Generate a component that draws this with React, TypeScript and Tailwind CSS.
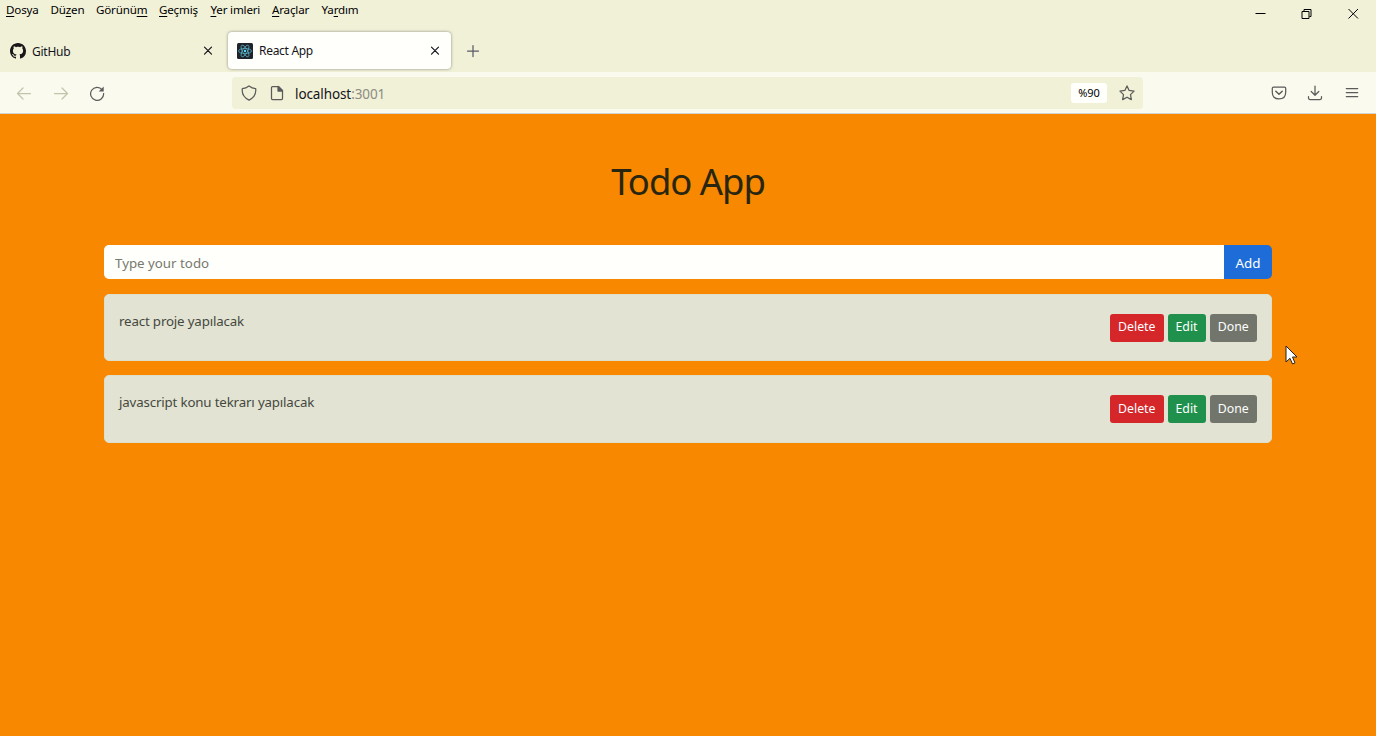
import type { ReactNode } from "react";

const menus: [string, string, string, string][] = [
  ["", "D", "osya", "w-[44.5px]"],
  ["Dü", "z", "en", "w-[45.5px]"],
  ["Görünü", "m", "", "w-[63px]"],
  ["", "G", "eçmiş", "w-[51.5px]"],
  ["", "Y", "er imleri", "w-[61.5px]"],
  ["", "A", "raçlar", "w-[49.5px]"],
  ["Ya", "r", "dım", "w-[45px]"],
];

function Icon({ size = 16, className = "", children }: { size?: number; className?: string; children: ReactNode }) {
  return (
    <svg width={size} height={size} viewBox="0 0 16 16" fill="none" stroke="currentColor" strokeWidth="1.25" strokeLinecap="round" strokeLinejoin="round" className={`shrink-0 ${className}`}>
      {children}
    </svg>
  );
}

const Cross = ({ className }: { className: string }) => (
  <Icon className={className}><path d="M4.5 4.200l7 7M11.500 4.200l-7 7" strokeWidth="1.2" /></Icon>
);

function ReactLogo() {
  return (
    <svg width="16" height="16" viewBox="0 0 16 16" className="ml-[9px] shrink-0">
      <rect width="16" height="16" rx="1.5" fill="#20232a" />
      <g fill="none" stroke="#55b4cc" strokeWidth=".75">
        <ellipse cx="8" cy="8" rx="6.5" ry="2.5" />
        <ellipse cx="8" cy="8" rx="6.5" ry="2.5" transform="rotate(60 8 8)" />
        <ellipse cx="8" cy="8" rx="6.5" ry="2.5" transform="rotate(120 8 8)" />
      </g>
      <circle cx="8" cy="8" r="1.2" fill="#61dafb" />
    </svg>
  );
}

function GithubLogo() {
  return (
    <svg width="16" height="16" viewBox="0 0 16 16" fill="#191717" className="ml-[10px] shrink-0">
      <path d="M8 0C3.58 0 0 3.58 0 8c0 3.54 2.29 6.53 5.47 7.59.4.07.55-.17.55-.38 0-.19-.01-.82-.01-1.49-2.01.37-2.53-.49-2.69-.94-.09-.23-.48-.94-.82-1.13-.28-.15-.68-.52-.01-.53.63-.01 1.08.58 1.23.82.72 1.21 1.87.87 2.33.66.07-.52.28-.87.51-1.07-1.78-.2-3.64-.89-3.64-3.95 0-.87.31-1.59.82-2.15-.08-.2-.36-1.02.08-2.12 0 0 .67-.21 2.2.82.64-.18 1.32-.27 2-.27s1.36.09 2 .27c1.53-1.04 2.2-.82 2.2-.82.44 1.1.16 1.92.08 2.12.51.56.82 1.27.82 2.15 0 3.07-1.87 3.75-3.65 3.95.29.25.54.73.54 1.48 0 1.07-.01 1.93-.01 2.2 0 .21.15.46.55.38A8.01 8.01 0 0 0 16 8c0-4.42-3.58-8-8-8z" />
    </svg>
  );
}

function Todo({ text }: { text: string }) {
  return (
    <div className="flex h-[67.4px] items-start justify-between rounded-[5px] border border-[#dddecb] bg-[#e2e3d2] px-[14px] pt-[16.500px]">
      <span className="text-[13.300px] leading-[18px] tracking-[-0.160px] text-[#45483f]">{text}</span>
      <div className="mt-[2px] flex h-[28px] gap-1 text-[12.3px] text-white">
        <button className="w-[53.500px] rounded-[3px] bg-[#d5262a]">Delete</button>
        <button className="w-[38px] rounded-[3px] bg-[#20914d]">Edit</button>
        <button className="w-[47.500px] rounded-[3px] bg-[#71756b]">Done</button>
      </div>
    </div>
  );
}

export default function App() {
  return (
    <div className="relative flex h-[736px] w-[1376px] flex-col overflow-hidden bg-[#f78800] font-['Noto_Sans',sans-serif]">
      <header className="flex h-[72px] shrink-0 flex-col bg-[#f1f1d8]">
        <div className="flex h-[28px] justify-between">
          <nav className="flex pl-[6px] pt-[1px] text-[11.6px] leading-[17px] text-black">
            {menus.map(([a, b, c, w]) => (
              <span key={a + b + c} className={`${w} whitespace-nowrap tracking-[-0.18px]`}>{a}<span className="underline underline-offset-2">{b}</span>{c}</span>
            ))}
          </nav>
          <div className="flex items-center pr-[17px] text-black">
            <svg width="104" height="12" viewBox="0 0 104 12" fill="none" stroke="currentColor">
              <path d="M0.5 5.5h10M47 3.5h7v7h-7zM49 3V1.5h7v7h-1.5M93.5 1l9.5 9.5M103 1l-9.5 9.5" />
            </svg>
          </div>
        </div>
        <div className="flex h-[44px] items-start pt-[4px] text-[12px] text-[#15141a]">
          <div className="flex h-[38px] w-[228px] items-center">
            <GithubLogo /><span className="ml-[6px] mt-px tracking-[-0.25px]">GitHub</span><Cross className="ml-auto mr-[12px]" />
          </div>
          <div className="flex h-[37px] w-[223px] items-center rounded-[4px] bg-[#fffffc] shadow-[0_0_3px_rgba(90,90,90,0.7)]">
            <ReactLogo /><span className="ml-[6px] mt-px tracking-[-0.3px]">React App</span><Cross className="ml-auto mr-[8px]" />
          </div>
          <Icon className="ml-[14px] mt-[11px] text-[#5b5b66]"><path d="M8 2.5v11M2.5 8h11" /></Icon>
        </div>
      </header>
      <div className="flex h-[42px] shrink-0 items-center border-b border-[#d3d2d5] bg-[#fafaee] text-[#5b5b5a]">
        <Icon className="ml-[16px] text-[#c4c4ac]"><path d="M1.5 8.500h13M7 3L1.5 8.500 7 14" /></Icon>
        <Icon className="ml-[21px] text-[#c4c4ac]"><path d="M1.5 8.500h13M9 3L14.5 8.500 9 14" /></Icon>
        <Icon className="ml-[20px]"><path d="M13.2 4.800A6.500 6.500 0 1 0 14.6 8.500" /><path d="M14.7 1.600v5h-5z" fill="currentColor" stroke="none" /></Icon>
        <div className="ml-[127px] flex h-[32px] w-[911px] items-center rounded-[4px] bg-[#f1f1d8]">
          <Icon className="ml-[9px]"><path d="M8 .9q3 2.300 6.700 2.800c.6 5.100-2.200 9.300-6.700 11.400C3.500 13 .7 8.800 1.300 3.700Q5 3.200 8 .9z" /></Icon>
          <Icon className="ml-[12px]"><path d="M3.500 1.500h6l4 4v8q0 1-1 1h-9q-1 0-1-1v-11q0-1 1-1z" /><path d="M9 1.500v4.500h4.500z" fill="currentColor" /></Icon>
          <span className="ml-[10px] mt-[3px] text-[13.5px] tracking-[-0.1px] text-[#15141a]">localhost<span className="text-[#8c8c82]">:3001</span></span>
          <span className="ml-auto flex h-[20px] w-[36px] items-center justify-center rounded-[3px] bg-[#fffffc] pt-[2px] text-[11px] text-black">%90</span>
          <Icon className="ml-[12px] mr-[8px]"><path d="M8 .9l2.150 4.500 4.900.7-3.550 3.500.85 5L8 12.200l-4.350 2.400.85-5L.95 6.100l4.900-.7z" /></Icon>
        </div>
        <Icon className="ml-[128px]"><path d="M2.500 2h11q1.200 0 1.200 1.200v4q0 6.700-6.700 6.700T1.300 7.200v-4Q1.300 2 2.500 2z" /><path d="M4.800 6.200L8 9.300l3.200-3.100" strokeWidth="1.500" /></Icon>
        <Icon className="ml-[20px]"><path d="M8 1v9M4.200 6.500L8 10.300l3.800-3.800M1.500 11.500v1.600q0 1.400 1.400 1.400h10.200q1.400 0 1.400-1.400v-1.600" /></Icon>
        <Icon className="ml-[21px]"><path d="M2.300 3.500h11.400M2.300 7.500h11.400M2.300 11.500h11.400" /></Icon>
      </div>
      <main className="mx-[104px] flex flex-col">
        <h1 className="mt-[43px] h-[48px] text-center text-[36.5px] leading-[48px] tracking-[-1.050px] text-[#282611]">Todo App</h1>
        <form className="mt-[40px] flex h-[34px] overflow-hidden rounded-[5px]">
          <input placeholder="Type your todo" className="min-w-0 flex-1 bg-[#fffffc] px-[11px] pt-[3px] text-[13.3px] text-[#41464b] outline-none placeholder:text-[#77796f]" />
          <button type="button" className="w-[48px] bg-[#1d6cd8] pt-[2px] text-[13.4px] text-white">Add</button>
        </form>
        <div className="mt-[15px] flex flex-col gap-[14px]">
          <Todo text="react proje yapılacak" />
          <Todo text="javascript konu tekrarı yapılacak" />
        </div>
      </main>
      <svg width="14" height="21" viewBox="0 0 14 21" className="absolute left-[1285px] top-[345px]">
        <path d="M1 1v16l4-3.700 2.500 5.700 2.500-1.100L7.500 12H12z" fill="white" stroke="#222" />
      </svg>
    </div>
  );
}
